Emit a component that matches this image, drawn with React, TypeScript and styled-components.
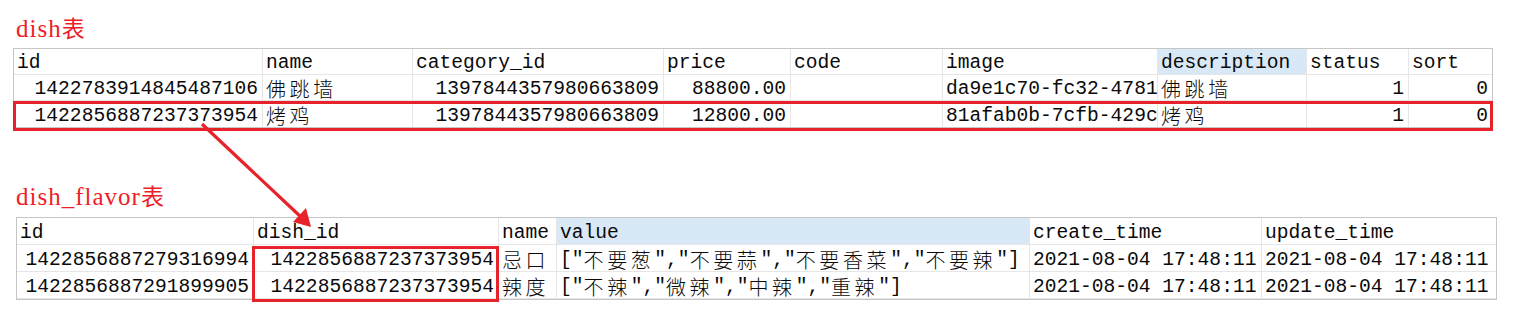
import React from 'react';
import styled, { createGlobalStyle, css } from 'styled-components';

type Align = 'left' | 'right';

interface Column {
    title: string,
    width: number,
    align: Align,
    active?: boolean
}

const dishColumns: Column[] = [
    { title: 'id', width: 249, align: 'right' },
    { title: 'name', width: 150, align: 'left' },
    { title: 'category_id', width: 251, align: 'right' },
    { title: 'price', width: 127, align: 'right' },
    { title: 'code', width: 152, align: 'left' },
    { title: 'image', width: 215, align: 'left' },
    { title: 'description', width: 149, align: 'left', active: true },
    { title: 'status', width: 102, align: 'right' },
    { title: 'sort', width: 83, align: 'right' },
];

const dishRows = [
    ['1422783914845487106', '佛跳墙', '1397844357980663809', '88800.00', '', 'da9e1c70-fc32-4781', '佛跳墙', '1', '0'],
    ['1422856887237373954', '烤鸡', '1397844357980663809', '12800.00', '', '81afab0b-7cfb-429c', '烤鸡', '1', '0'],
];

const flavorColumns: Column[] = [
    { title: 'id', width: 237, align: 'right' },
    { title: 'dish_id', width: 245, align: 'right' },
    { title: 'name', width: 58, align: 'left' },
    { title: 'value', width: 473, align: 'left', active: true },
    { title: 'create_time', width: 232, align: 'left' },
    { title: 'update_time', width: 234, align: 'left' },
];

const flavorRows = [
    ['1422856887279316994', '1422856887237373954', '忌口', '["不要葱","不要蒜","不要香菜","不要辣"]', '2021-08-04 17:48:11', '2021-08-04 17:48:11'],
    ['1422856887291899905', '1422856887237373954', '辣度', '["不辣","微辣","中辣","重辣"]', '2021-08-04 17:48:11', '2021-08-04 17:48:11'],
];

const RED = '#e8222b';

// split a string into latin and chinese runs so the chinese ones get the wide cell
const withHan = (text: string) =>
    text.split(/([\u4e00-\u9fff]+)/).map((part, i) =>
        /[\u4e00-\u9fff]/.test(part) ? <Han key={i}>{part}</Han> : part
    );

interface TableProps {
    columns: Column[],
    rows: string[][],
    rowHeight: number,
    marked?: number,
    className?: string,
    children?: React.ReactNode
}

const DataTable = ({ columns, rows, rowHeight, marked, className, children }: TableProps) => {
    const template = columns.map(c => `${c.width}px`).join(' ');
    return (
        <Table className={className}>
            <Row $template={template} $height={rowHeight}>
                {columns.map((c, i) => (
                    <Cell key={c.title} $align="left" $active={c.active} $last={i === columns.length - 1}>
                        {c.title}
                    </Cell>
                ))}
            </Row>
            {rows.map((row, r) => (
                <Row key={r} $template={template} $height={rowHeight} $marked={marked === r}>
                    {row.map((value, i) => (
                        <Cell key={i} $align={columns[i].align} $last={i === columns.length - 1}>
                            {withHan(value)}
                        </Cell>
                    ))}
                </Row>
            ))}
            {children}
        </Table>
    );
};

const App = () => {
    return (
        <Page>
            <GlobalStyle />
            <Caption>dish<Han $title>表</Han></Caption>
            <DishTable columns={dishColumns} rows={dishRows} rowHeight={26} marked={1} />
            <Caption $gap={54}>dish_flavor<Han $title>表</Han></Caption>
            <FlavorTable columns={flavorColumns} rows={flavorRows} rowHeight={27}>
                <ColumnMark />
            </FlavorTable>
            <Arrow viewBox="0 0 1528 330" width="1528" height="330">
                <line x1="202" y1="124" x2="301" y2="217" stroke={RED} strokeWidth="3.2" />
                <polygon points="311,227 293,222 306,208" fill={RED} />
            </Arrow>
        </Page>
    );
};

export default App;

const GlobalStyle = createGlobalStyle`
    html, body {
        margin: 0;
        padding: 0;
        background: #ffffff;
    }
`;

const Page = styled.div`
    position: relative;
    width: 1528px;
    height: 330px;
    display: flex;
    flex-direction: column;
    align-items: flex-start;
    overflow: hidden;
    background: #ffffff;
`;

const Caption = styled.div<{ $gap?: number }>`
    margin: ${p => p.$gap ?? 14}px 0 0 16px;
    height: 30px;
    line-height: 30px;
    font-family: "Liberation Serif", "Noto Sans CJK SC", serif;
    font-size: 25px;
    letter-spacing: 1px;
    color: #ee1d27;
`;

const Han = styled.span<{ $title?: boolean }>`
    font-family: "Noto Sans CJK SC", sans-serif;
    line-height: 1;
    ${p => p.$title ? css`
        font-size: 23px;
        letter-spacing: 0;
    ` : css`
        font-size: 20px;
        font-weight: 300;
        letter-spacing: 3.6px;
    `}
`;

const Table = styled.div`
    position: relative;
    display: flex;
    flex-direction: column;
    border: 1px solid #c6c6c6;
    background: #ffffff;
`;

const DishTable = styled(DataTable)`
    margin: 4px 0 0 13px;
`;

const FlavorTable = styled(DataTable)`
    margin: 5px 0 0 16px;
`;

const Row = styled.div<{ $template: string, $height: number, $marked?: boolean }>`
    position: relative;
    display: grid;
    grid-template-columns: ${p => p.$template};
    height: ${p => p.$height}px;
    border-bottom: 1px solid #e6e6e6;
    box-sizing: border-box;

    &:last-of-type {
        border-bottom: none;
    }

    ${p => p.$marked && css`
        &::after {
            content: '';
            position: absolute;
            top: 0;
            left: -1px;
            right: -1px;
            bottom: -4px;
            border: 3px solid ${RED};
            pointer-events: none;
        }
    `}
`;

const Cell = styled.div<{ $align: Align, $active?: boolean, $last?: boolean }>`
    display: flex;
    align-items: center;
    justify-content: ${p => p.$align === 'right' ? 'flex-end' : 'flex-start'};
    padding: 3px 4px 0 3px;
    white-space: nowrap;
    line-height: 20px;
    font-family: "Liberation Mono", "Noto Sans CJK SC", monospace;
    font-size: 19.6px;
    color: #0a0a0a;
    background: ${p => p.$active ? '#d9e8f6' : 'transparent'};
    border-right: ${p => p.$last ? 'none' : '1px solid #e6e6e6'};
`;

const ColumnMark = styled.div`
    position: absolute;
    left: 235px;
    top: 28px;
    width: 247px;
    height: 56px;
    box-sizing: border-box;
    border: 3px solid ${RED};
    pointer-events: none;
`;

const Arrow = styled.svg`
    position: absolute;
    left: 0;
    top: 0;
    pointer-events: none;
`;
